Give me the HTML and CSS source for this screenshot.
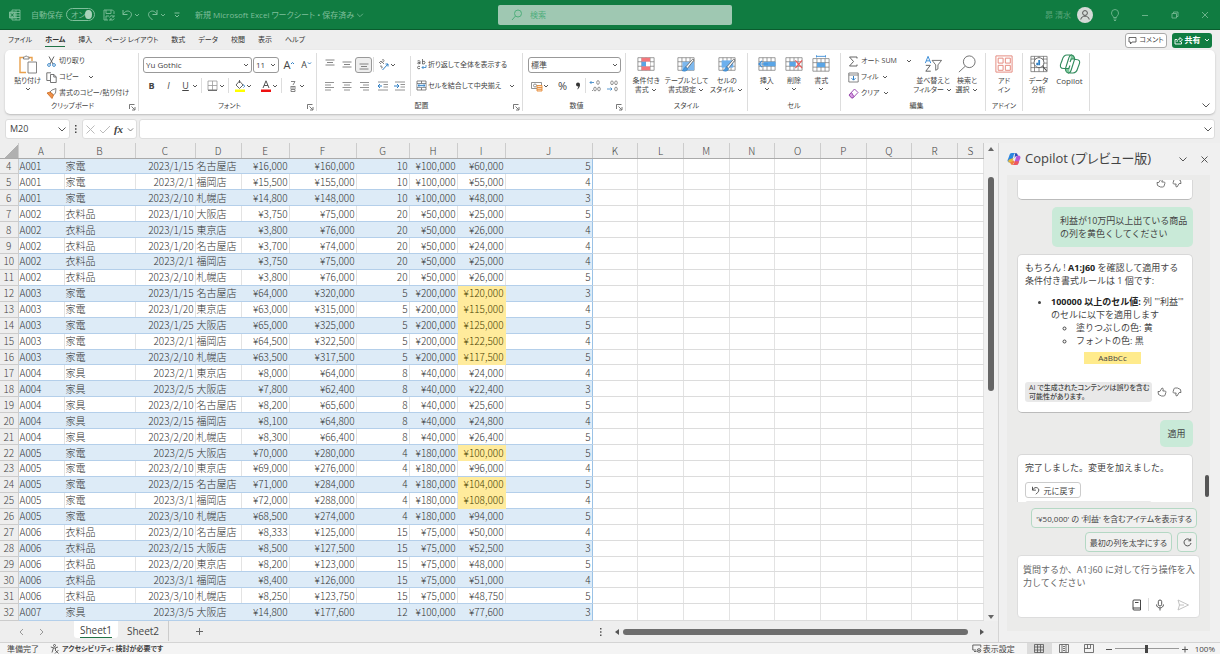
FILE: index.html
```html
<!DOCTYPE html>
<html lang="ja">
<head>
<meta charset="utf-8">
<title>新規 Microsoft Excel ワークシート</title>
<link rel="stylesheet" href="styles.css">
</head>
<body>
<svg class="defs" aria-hidden="true">
  <symbol id="chev" viewBox="0 0 8 8"><path d="M2 3l2 2 2-2" fill="none" stroke="currentColor" stroke-width=".9"/></symbol>
  <symbol id="chev-l" viewBox="0 0 12 12"><path d="M2.500 4.500L6 8l3.500-3.500" fill="none" stroke="currentColor" stroke-width=".9"/></symbol>
  <symbol id="launch" viewBox="0 0 8 8"><path d="M1.500 6V1.500h5M3.500 3.500l3 3M7 4v3H4" fill="none" stroke="#555" stroke-width=".8"/></symbol>
  <symbol id="up" viewBox="0 0 10 10"><path d="M1 4.500h1.800L5 1c1.500 0 1.400 1.500.8 3H8c1 0 1 1 .8 1.600L8 8.200c-.2.600-.6.800-1.200.8H4.500L1.500 7.500z" fill="none" stroke="#555" stroke-width=".8"/></symbol>
  <symbol id="al" viewBox="0 0 12 12"><path d="M1 2.500h9M1 5h6M1 7.500h9M1 10h6" stroke="#777" fill="none" stroke-width=".8"/></symbol>
  <symbol id="ac" viewBox="0 0 12 12"><path d="M1.500 2.500h9M3 5h6M1.500 7.500h9M3 10h6" stroke="#777" fill="none" stroke-width=".8"/></symbol>
  <symbol id="ar" viewBox="0 0 12 12"><path d="M2 2.500h9M5 5h6M2 7.500h9M5 10h6" stroke="#777" fill="none" stroke-width=".8"/></symbol>
  <symbol id="lines" viewBox="0 0 12 12"><path d="M1.500 3h9M3 5.500h6M1.500 8h9" stroke="#666" fill="none" stroke-width=".8"/></symbol>
  <symbol id="grid" viewBox="0 0 20 18"><path d="M1 2h18v14H1zM1 6.500h18M1 11.500h18M5.500 2v14M10 2v14M14.500 2v14" fill="#fff" stroke="#777" stroke-width=".8"/></symbol>
  <symbol id="brush" viewBox="0 0 20 20"><path d="M19 5.500L11.500 15 9.500 13.500 17.500 4.500z" fill="#fff" stroke="#555" stroke-width=".8"/><path d="M9.800 13.500c-2 0-2 2.500-4 4 2.500 1 5.500.5 6-2.200z" fill="#4a9be0" stroke="#2b78bd" stroke-width=".6"/></symbol>
</svg>

<header class="title">
  <div class="title-left">
    <svg class="xl" width="12" height="12" viewBox="0 0 12 12" fill="none" stroke="currentColor" stroke-width=".9"><path d="M3 3V1h8v10H3V9M7 1v10M3 3.500h8M3 6h8M3 8.500h8"/><path d="M.5 3h5.500v6H.5z" fill="#6fb58e"/><path d="M2 4.500l2.500 3M4.500 4.500L2 7.500" stroke="#107c41"/></svg>
    <label class="autosave">自動保存 <button class="toggle" aria-label="自動保存 オン"><span>オン</span><i></i></button></label>
    <button class="plain" aria-label="保存"><svg width="12" height="12" viewBox="0 0 12 12" fill="none" stroke="currentColor" stroke-width=".9"><path d="M5 11H1V1h8.500L11 2.500V5M3 1v3.500h5V1M3 11V7h3M6.500 8.500a2.300 2.300 0 0 1 4-1M11 6v2H9M11.300 9.500a2.300 2.300 0 0 1-4 .7M7 12v-2h2"/></svg></button>
    <button class="plain undo" aria-label="元に戻す"><svg width="12" height="12" viewBox="0 0 12 12" fill="none" stroke="currentColor"><path d="M2 1v4.500h4.500M2 5.500C4 2 6.500 1.500 8.500 2.500c2.500 1.300 2.500 4 .5 6L6.500 11"/></svg><svg width="8" height="8"><use href="#chev"/></svg></button>
    <button class="plain undo" aria-label="やり直し"><svg width="12" height="12" viewBox="0 0 12 12" fill="none" stroke="currentColor"><path d="M10 1v4.500H5.500M10 5.500C8 2 5.500 1.500 3.500 2.500 1 3.800 1 6.500 3 8.500L5.500 11"/></svg><svg width="8" height="8"><use href="#chev"/></svg></button>
    <button class="plain custom" aria-label="カスタマイズ"><svg width="8" height="8" viewBox="0 0 8 8" fill="none" stroke="currentColor"><path d="M1.500 2h5M2 4l2 2 2-2"/></svg></button>
    <button class="plain doc">新規 Microsoft Excel ワークシート • 保存済み<svg width="10" height="10" viewBox="0 0 12 12"><use href="#chev-l"/></svg></button>
  </div>
  <label class="search"><svg width="12" height="12" viewBox="0 0 12 12" fill="none" stroke="currentColor"><circle cx="7" cy="4.500" r="3.500"/><path d="M4.500 7L1 11"/></svg><input type="text" placeholder="検索" aria-label="検索"></label>
  <div class="title-right">
    <span>昴 清水</span>
    <svg width="16" height="16" viewBox="0 0 16 16"><circle cx="8" cy="8" r="8" fill="#d5dad7"/><g fill="none" stroke="#555"><circle cx="8" cy="6" r="2.400"/><path d="M3.800 12.500c.5-4.500 7.900-4.500 8.400 0"/></g></svg>
    <button class="plain bulb" aria-label="ヒント"><svg width="10" height="12" viewBox="0 0 10 12" fill="none" stroke="currentColor" stroke-width=".9"><path d="M3.500 8.500C3.500 7 1.500 6.500 1.500 4a3.500 3.500 0 0 1 7 0c0 2.500-2 3-2 4.500zM3.500 10h3M4 11.500h2"/></svg></button>
    <button class="plain win" aria-label="最小化"><svg width="8" height="8"><path d="M1 4.500h6" stroke="currentColor" stroke-width=".9"/></svg></button>
    <button class="plain win" aria-label="元のサイズ"><svg width="8" height="8" fill="none" stroke="currentColor" stroke-width=".9"><path d="M1 2.500h4.500V7H1zM2.500 2.500V1h4.500v4.500H5.500"/></svg></button>
    <button class="plain win" aria-label="閉じる"><svg width="8" height="8" stroke="currentColor" stroke-width=".9"><path d="M1 1l6 6M7 1L1 7"/></svg></button>
  </div>
</header>

<nav class="tabs">
  <a href="#">ファイル</a><a href="#" class="on">ホーム</a><a href="#">挿入</a><a href="#">ページ レイアウト</a><a href="#">数式</a><a href="#">データ</a><a href="#">校閲</a><a href="#">表示</a><a href="#">ヘルプ</a>
  <button class="comment"><svg width="9" height="9" viewBox="0 0 9 9"><path d="M1 1.500h7v4.500H4L2.500 8V6H1z" fill="none" stroke="#444" stroke-width=".8"/></svg>コメント</button>
  <button class="share"><svg width="9" height="9" viewBox="0 0 9 9"><path d="M3 3.500H1V8h6.500V6M3 6c0-2 1-3 3-3V1.500L8.500 4 6 6V4.500" fill="none" stroke="#fff" stroke-width=".9"/></svg>共有<svg width="8" height="8"><use href="#chev"/></svg></button>
</nav>

<section class="ribbon">
  <div class="grp g-clip">
    <div class="body">
      <button class="big paste"><svg width="20" height="20" viewBox="0 0 20 20" fill="none"><path d="M8 18.500H2V3.500h3.500M10.500 3.500H14V7" stroke="#e9a04c" stroke-width="1.400"/><path d="M5.500 5V3h1.300a1.500 1.500 0 0 1 2.800 0H11v2z" stroke="#777" fill="#fff" stroke-width=".9"/><path d="M10 8h8.500v11H10z" stroke="#777" fill="#fff" stroke-width=".9"/></svg>貼り付け<svg width="8" height="8"><use href="#chev"/></svg></button>
      <div class="stack">
        <button><svg width="11" height="11" viewBox="0 0 11 11" fill="none" stroke="#555" stroke-width=".9"><path d="M3 .5L7 8M8 .5L4 8"/><g stroke="#2f7fc4"><circle cx="3" cy="9" r="1.400"/><circle cx="8" cy="9" r="1.400"/></g></svg>切り取り</button>
        <button><svg width="11" height="11" viewBox="0 0 11 11" fill="none" stroke="#666" stroke-width=".9"><path d="M4 8.500H.8V.8H5M4.500 2.500h3.500L10.200 5v5.500H4.500zM7.800 2.500V5h2.400"/></svg>コピー <svg class="gap" width="8" height="8"><use href="#chev"/></svg></button>
        <button><svg width="11" height="11" viewBox="0 0 11 11"><path d="M6 2L10 .5 9.500 5 7.500 7 4 4z" fill="#fff" stroke="#666" stroke-width=".8"/><path d="M1 5l3-1 3.500 3L6 10.500z" fill="#f0924a" stroke="#c96a20" stroke-width=".8"/></svg>書式のコピー/貼り付け</button>
      </div>
    </div>
    <h2>クリップボード</h2><svg class="dlg" width="8" height="8"><use href="#launch"/></svg>
  </div>

  <div class="grp g-font">
    <div class="body rows">
      <div class="row">
        <span class="sel font"><select aria-label="フォント"><option>Yu Gothic</option></select><svg width="8" height="8"><use href="#chev"/></svg></span>
        <span class="sel size"><select aria-label="フォント サイズ"><option>11</option></select><svg width="8" height="8"><use href="#chev"/></svg></span>
        <button class="ib" aria-label="拡大"><span class="az">A</span><svg width="5" height="8" viewBox="0 0 5 8"><path d="M1 3l1.500-1.500L4 3" stroke="#2f7fc4" fill="none"/></svg></button>
        <button class="ib" aria-label="縮小"><span class="az small">A</span><svg width="5" height="8" viewBox="0 0 5 8"><path d="M1 1.500L2.500 3 4 1.500" stroke="#2f7fc4" fill="none"/></svg></button>
      </div>
      <div class="row">
        <button class="ib"><b>B</b></button><button class="ib"><i>I</i></button><button class="ib"><u>U</u></button><svg class="cv" width="8" height="8"><use href="#chev"/></svg>
        <i class="bar"></i>
        <button class="ib" aria-label="罫線"><svg width="11" height="11" viewBox="0 0 11 11" fill="none" stroke="#999"><path d="M1 1h9v9H1zM5.500 1v9M1 5.500h9" stroke-width=".8"/><path d="M1 10.300h9" stroke="#555"/></svg></button><svg class="cv" width="8" height="8"><use href="#chev"/></svg>
        <i class="bar"></i>
        <button class="ib" aria-label="塗りつぶし"><svg width="12" height="12" viewBox="0 0 12 12"><path d="M5.500 1L2 5l3.500 3.500L9 5zM5.500 0v3" fill="#fff" stroke="#555" stroke-width=".9"/><path d="M9.500 4.500q2 2.500 0 3" stroke="#2f7fc4" fill="none"/><path d="M1 9.500h10V12H1z" fill="#ff0"/></svg></button><svg class="cv" width="8" height="8"><use href="#chev"/></svg>
        <button class="ib" aria-label="フォントの色"><svg width="12" height="12" viewBox="0 0 12 12"><path d="M3 8L6 .8 9 8M4 5.500h4" fill="none" stroke="#555"/><path d="M1 9.500h10V12H1z" fill="#e11"/></svg></button><svg class="cv" width="8" height="8"><use href="#chev"/></svg>
        <i class="bar"></i>
        <button class="ib" aria-label="ふりがな"><svg width="10" height="12" viewBox="0 0 10 12" fill="none" stroke="#777" stroke-width=".9"><path d="M3 1.500h4L5 5M2.500 6.500h5M2 8h6M3 9.500h4M3 9.500v2h4v-2"/></svg></button><svg class="cv" width="8" height="8"><use href="#chev"/></svg>
      </div>
    </div>
    <h2>フォント</h2><svg class="dlg" width="8" height="8"><use href="#launch"/></svg>
  </div>

  <div class="grp g-align">
    <div class="body cols">
      <div class="rows left">
        <div class="row">
          <button class="ib" aria-label="上揃え"><svg width="12" height="12"><use href="#lines" y="-2"/></svg></button><button class="ib" aria-label="中央"><svg width="12" height="12"><use href="#lines"/></svg></button><button class="ib on" aria-label="下揃え"><svg width="12" height="12"><use href="#lines" y="2"/></svg></button>
          <i class="bar"></i>
          <button class="ib" aria-label="方向"><svg width="12" height="12" viewBox="0 0 12 12" fill="none"><path d="M1 4l2-2 3 3M2 5l1.500-1.500M4 1q2-1 2 .5T4.500 3M2 7.500q1-1.500 2 0t-1 1.500" stroke="#666" stroke-width=".8"/><path d="M4.500 11L10 5M7.500 5H10v2.500" stroke="#2f7fc4"/></svg></button><svg class="cv" width="8" height="8"><use href="#chev"/></svg>
        </div>
        <div class="row">
          <button class="ib" aria-label="左揃え"><svg width="12" height="12"><use href="#al"/></svg></button><button class="ib" aria-label="中央揃え"><svg width="12" height="12"><use href="#ac"/></svg></button><button class="ib" aria-label="右揃え"><svg width="12" height="12"><use href="#ar"/></svg></button>
          <i class="bar"></i>
          <button class="ib" aria-label="インデント減"><svg width="12" height="12" viewBox="0 0 12 12" fill="none"><path d="M1 2h10M6.500 4.500H11M6.500 7H11M1 10h10" stroke="#777" stroke-width=".8"/><path d="M5 6H1M3 4L1 6l2 2" stroke="#2f7fc4"/></svg></button><button class="ib" aria-label="インデント増"><svg width="12" height="12" viewBox="0 0 12 12" fill="none"><path d="M1 2h10M6.500 4.500H11M6.500 7H11M1 10h10" stroke="#777" stroke-width=".8"/><path d="M0 6h4.500M3 4l2 2-2 2" stroke="#2f7fc4"/></svg></button>
        </div>
      </div>
      <i class="vbar"></i>
      <div class="rows wide">
        <div class="row"><button class="txt"><svg width="11" height="11" viewBox="0 0 11 11" fill="none" stroke="#555" stroke-width=".8"><path d="M1.500 2q2.500-1 2.500.5V5M4 3.500Q1.500 3 1.500 4.200T4 4.500M6.500 0v5q2.500.5 2.500-1.500T6.500 2.500M4 7.500Q1.500 6.500 1.500 8.500T4 9.500"/><path d="M10 6v2.500H6M7.500 7L6 8.500 7.500 10" stroke="#2f7fc4"/></svg>折り返して全体を表示する</button></div>
        <div class="row"><button class="txt"><svg width="11" height="11" viewBox="0 0 11 11" fill="none"><path d="M1 1h9v9H1zM1 3.500h9M1 7.500h9M5.500 1v2.500M5.500 7.500V10" stroke="#666" stroke-width=".8"/><path d="M1.500 3.900h8v3.300h-8z" fill="#d8eafa"/><path d="M2 5.500h7M3.500 4.200L2 5.500l1.500 1.300M7.500 4.200L9 5.500 7.500 6.800" stroke="#2f7fc4" stroke-width=".8"/></svg>セルを結合して中央揃え</button><svg class="cv push" width="8" height="8"><use href="#chev"/></svg></div>
      </div>
    </div>
    <h2>配置</h2><svg class="dlg" width="8" height="8"><use href="#launch"/></svg>
  </div>

  <div class="grp g-num">
    <div class="body rows">
      <div class="row"><span class="sel num"><select aria-label="表示形式"><option>標準</option></select><svg width="8" height="8"><use href="#chev"/></svg></span></div>
      <div class="row">
        <button class="ib" aria-label="通貨"><svg width="12" height="12" viewBox="0 0 12 12" fill="none"><path d="M.5 2.500h10v6H.5z" stroke="#777" stroke-width=".8"/><circle cx="4" cy="5.500" r="1.500" stroke="#777" stroke-width=".8"/><path d="M6 5.500h5V11H6zM6 7.500h5M6 9.300h5" stroke="#e58b35" fill="#fbe3cc" stroke-width=".9"/></svg></button><svg class="cv" width="8" height="8"><use href="#chev"/></svg>
        <button class="ib pct">%</button><button class="ib comma" aria-label="桁区切り"><svg width="8" height="12" viewBox="0 0 8 12"><path d="M5.900 4.500C6 7 5 8.500 3 9.500 4 8 4.500 7 4.300 6z" fill="#333"/><circle cx="4" cy="4.500" r="2" fill="#333"/></svg></button>
        <i class="bar"></i>
        <button class="ib" aria-label="小数点以下を増やす"><svg width="13" height="12" viewBox="0 0 13 12" fill="none" stroke="#777" stroke-width=".8"><path d="M5 2.500H1M2.500 1L1 2.500 2.500 4" stroke="#2f7fc4"/><ellipse cx="9" cy="2.500" rx="1.300" ry="1.900"/><ellipse cx="6" cy="9" rx="1.300" ry="1.900"/><ellipse cx="10" cy="9" rx="1.300" ry="1.900"/><path d="M3 10.500h1"/></svg></button>
        <button class="ib" aria-label="小数点以下を減らす"><svg width="13" height="12" viewBox="0 0 13 12" fill="none" stroke="#777" stroke-width=".8"><ellipse cx="6" cy="2.800" rx="1.300" ry="1.900"/><ellipse cx="10" cy="2.800" rx="1.300" ry="1.900"/><ellipse cx="10" cy="9" rx="1.300" ry="1.900"/><path d="M1 9h5M4.500 7.500L6 9l-1.500 1.500" stroke="#2f7fc4"/></svg></button>
      </div>
    </div>
    <h2>数値</h2><svg class="dlg" width="8" height="8"><use href="#launch"/></svg>
  </div>

  <div class="grp g-style">
    <div class="body bigs">
      <button class="big"><svg width="20" height="20" viewBox="0 0 20 20"><use href="#grid" width="20" height="18" y="1"/><path d="M5 3h9.500v4.500H5z" fill="#f4777c"/><path d="M5 12.500h9.500V17H5z" fill="#f4777c"/><path d="M5 7.500h5v5H5z" fill="#5aa5e6"/><path d="M10 7.500h4.500v5H10z" fill="#fff"/></svg>条件付き<span>書式 <svg width="8" height="8"><use href="#chev"/></svg></span></button>
      <button class="big"><svg width="20" height="20" viewBox="0 0 20 20"><use href="#grid" width="20" height="18" y="1"/><path d="M6 7.500h13V17H6z" fill="#7db8ee"/><use href="#brush" width="20" height="20"/></svg>テーブルとして<span>書式設定 <svg width="8" height="8"><use href="#chev"/></svg></span></button>
      <button class="big"><svg width="20" height="20" viewBox="0 0 20 20"><use href="#grid" width="20" height="18" y="1"/><path d="M4 6h13v8H4z" fill="#6db0ee"/><use href="#brush" width="20" height="20"/></svg>セルの<span>スタイル <svg width="8" height="8"><use href="#chev"/></svg></span></button>
    </div>
    <h2>スタイル</h2>
  </div>

  <div class="grp g-cell">
    <div class="body bigs">
      <button class="big"><svg width="20" height="20" viewBox="0 0 20 20"><use href="#grid" width="20" height="18" y="1"/><path d="M6 7.500h13.500v5H6z" fill="#5aa5e6"/><path d="M11 10H1M4.500 6.500L1 10l3.500 3.500" stroke="#3f8fd8" fill="none" stroke-width="1.300"/></svg>挿入<svg width="8" height="8"><use href="#chev"/></svg></button>
      <button class="big"><svg width="20" height="20" viewBox="0 0 20 20"><use href="#grid" width="20" height="18" y="1"/><path d="M5 7.500h7v5H5z" fill="#5aa5e6"/><path d="M11.500 6l7.500 8.500M19 6l-7.500 8.500" stroke="#e55" stroke-width="1.200"/></svg>削除<svg width="8" height="8"><use href="#chev"/></svg></button>
      <button class="big"><svg width="20" height="20" viewBox="0 0 20 20"><path d="M5 1.500h10M5 .3v2.400M15 .3v2.400" stroke="#3f8fd8"/><use href="#grid" width="20" height="18" y="2"/><path d="M5.500 8.500h9v5h-9z" fill="#5aa5e6"/></svg>書式<svg width="8" height="8"><use href="#chev"/></svg></button>
    </div>
    <h2>セル</h2>
  </div>

  <div class="grp g-edit">
    <div class="body">
      <div class="stack">
        <button><svg width="11" height="11" viewBox="0 0 11 11"><path d="M9 2.500V1H1.500L5.500 5.500l-4 4.500H9V8.500" fill="none" stroke="#555" stroke-width=".9"/></svg>オート SUM <svg class="gap" width="8" height="8"><use href="#chev"/></svg></button>
        <button><svg width="11" height="11" viewBox="0 0 11 11" fill="none"><path d="M.8 1h9.400v9H.8zM.8 3h9.400" stroke="#666" stroke-width=".8"/><path d="M5.500 4v4M3.500 6.200l2 2 2-2" stroke="#2f7fc4"/></svg>フィル <svg width="8" height="8"><use href="#chev"/></svg></button>
        <button><svg width="11" height="11" viewBox="0 0 11 11" fill="none" stroke="#9c4fb0" stroke-width="1"><path d="M6.500 1L10 4.500 5 9.800H3.500L1 7z"/><path d="M1 7l2.500 2.800H5l1-1L3.500 4.500z" fill="#d79be3"/></svg>クリア <svg width="8" height="8"><use href="#chev"/></svg></button>
      </div>
      <button class="big"><svg width="20" height="20" viewBox="0 0 20 20" fill="none"><path d="M1.500 9L4.500 1.500 7.500 9M2.500 6.500h4" stroke="#3f8fd8" stroke-width="1.100"/><path d="M2 11.500h5L2 18h5.500" stroke="#555"/><path d="M9 6h10.500L15.500 11v4.500L13 17v-6z" stroke="#555" stroke-width=".9"/></svg>並べ替えと<span>フィルター <svg width="8" height="8"><use href="#chev"/></svg></span></button>
      <button class="big"><svg width="20" height="20" viewBox="0 0 20 20" fill="none" stroke="#555" stroke-width=".9"><circle cx="12.500" cy="7.500" r="6.500"/><path d="M8 12.500L1 19"/></svg>検索と<span>選択 <svg width="8" height="8"><use href="#chev"/></svg></span></button>
    </div>
    <h2>編集</h2>
  </div>

  <div class="grp g-add">
    <div class="body bigs">
      <button class="big"><svg width="20" height="20" viewBox="0 0 20 20" fill="none" stroke="#e58b80" stroke-width="1.100"><path d="M1 1h18v18H1zM3.500 3.500h5.500V9H3.500zM11.500 3.500H17V9h-5.500zM3.500 11.500h5.500V17H3.500zM11.500 11.500H17V17h-5.500z"/></svg>アド<span>イン</span></button>
    </div>
    <h2>アドイン</h2>
  </div>

  <div class="grp g-ana">
    <div class="body bigs">
      <button class="big"><svg width="20" height="20" viewBox="0 0 20 20" fill="none" stroke="#666" stroke-width=".8"><path d="M1 1.500h18v17H1zM1 4.500h18M1 9h18M1 14h18M5 1.500v17M10 1.500v17M15 1.500v17"/><circle cx="10" cy="8.500" r="5.500" fill="#fff" stroke="#444"/><path d="M7 11.500V8.500h2v3zM9.200 11.500v-6h2v6z" fill="#2f7fc4" stroke="none"/><path d="M14 12.500l4.500 5" stroke="#444" stroke-width="1.200"/></svg>データ<span>分析</span></button>
      <button class="big cop"><svg width="20" height="20" viewBox="0 0 22 20" fill="#fff" stroke="#2f8a5b" stroke-width="1.100"><path d="M13 1H8C5 1 4 3 3.200 6S.5 11 1.500 13s3 1.500 5 1.500L9.500 5q1-4 3.500-4z"/><path d="M12 1c2.500 0 3.200 1 3.800 4h-3.500L11 8" fill="#7cc79b"/><path d="M9 19h5c3 0 4-2 4.800-5s2.700-5 1.700-7-3-1.500-5-1.500L12.500 15q-1 4-3.500 4z"/><path d="M10 19c-2.500 0-3.200-1-3.800-4.500h3.500L11 11.500" fill="#7cc79b"/></svg>Copilot</button>
    </div>
  </div>
  <button class="collapse" aria-label="リボンを折りたたむ"><svg width="12" height="12" viewBox="0 0 12 12"><use href="#chev-l"/></svg></button>
</section>

<section class="formula">
  <label class="name"><input type="text" value="M20" aria-label="名前ボックス"><svg width="12" height="12" viewBox="0 0 12 12"><use href="#chev-l"/></svg></label>
  <svg class="dots" width="4" height="10"><path d="M1 1h1.500v1.500H1zM1 4.300h1.500v1.500H1zM1 7.600h1.500v1.500H1z" fill="#444"/></svg>
  <div class="fx"><svg width="11" height="11" viewBox="0 0 11 11"><path d="M1.500 1.500l8 8M9.500 1.500l-8 8" stroke="#bbb"/></svg><svg width="12" height="11" viewBox="0 0 12 11"><path d="M1 6l3 3 7-7" stroke="#bbb" fill="none"/></svg><em>fx</em><svg width="9" height="9" viewBox="0 0 12 12"><use href="#chev-l"/></svg></div>
  <label class="input"><input type="text" aria-label="数式バー"><svg width="12" height="12" viewBox="0 0 12 12"><use href="#chev-l"/></svg></label>
</section>

<main class="work">
  <div class="book">
    <div class="sheet">
      <div class="cells">
        <table id="sheet"></table>
      </div>
      <div class="vscroll"><svg width="8" height="8"><path d="M1 6h6L4 2z" fill="#666"/></svg><i></i><svg width="8" height="8"><path d="M1 2h6L4 6z" fill="#666"/></svg></div>
    </div>
    <div class="sheettabs">
      <button class="nav" aria-label="前へ"><svg width="8" height="10"><path d="M6 2L3 5l3 3" fill="none" stroke="#999"/></svg></button>
      <button class="nav" aria-label="次へ"><svg width="8" height="10"><path d="M2 2l3 3-3 3" fill="none" stroke="#999"/></svg></button>
      <button class="tab on"><span>Sheet1</span></button>
      <button class="tab"><span>Sheet2</span></button>
      <button class="add" aria-label="新しいシート"><svg width="9" height="9"><path d="M4.500 1v7M1 4.500h7" stroke="#666"/></svg></button>
      <div class="hscroll"><svg width="4" height="10"><path d="M1 1h1.500v1.500H1zM1 4.300h1.500v1.500H1zM1 7.600h1.500v1.500H1z" fill="#555"/></svg><svg class="la" width="8" height="8"><path d="M6 1v6L2 4z" fill="#555"/></svg><i></i><svg class="ra" width="8" height="8"><path d="M2 1v6l4-3z" fill="#555"/></svg></div>
    </div>
  </div>

  <aside class="copilot">
    <header>
      <svg width="14" height="14" viewBox="0 0 14 14"><path d="M9 1H5C3 1 2.800 2 2 4.500S0 8 .8 9.500 3 10.500 4.500 10L6.500 4Q7 1 9 1z" fill="#2b86e0"/><path d="M2 7.500C1 9 .5 10 2.500 10.500c1.500.3 2.500 0 3-1.500L6.500 6z" fill="#e8b83a"/><path d="M8.500 1c1.500 0 2 1 2.500 3H9L7.500 6 8 2z" fill="#2a4fb5"/><path d="M5 13h4c2 0 2.200-1 3-3.500s2-3.500 1.200-5S11 3.500 9.500 4l-2 6Q7 13 5 13z" fill="#b458d8"/><path d="M5 13c2 0 2.300-2 2.800-4l4.200.5C11.200 12 11 13 9 13z" fill="#ef5a5a"/><path d="M5.500 13c-1.500 0-2-1-2.500-3 2 0 2-.5 3-2l1.500 2z" fill="#f0803c"/></svg>
      <h1>Copilot (プレビュー版)</h1>
      <button class="plain" aria-label="オプション"><svg width="12" height="12" viewBox="0 0 12 12"><use href="#chev-l"/></svg></button>
      <button class="plain" aria-label="閉じる"><svg width="9" height="9" viewBox="0 0 9 9"><path d="M1.500 1.500l6 6M7.500 1.500l-6 6" stroke="currentColor" stroke-width=".9"/></svg></button>
    </header>
    <div class="panel">
      <div class="chat">
        <div class="card cut-top"><svg width="10" height="10"><use href="#up"/></svg><svg class="down" width="10" height="10"><use href="#up"/></svg></div>
        <p class="mine">利益が10万円以上出ている商品の列を黄色くしてください</p>
        <div class="card rule">
          <p>もちろん ! <b>A1:J60</b> を確認して適用する条件付き書式ルールは 1 個です:</p>
          <ul><li><b>100000 以上のセル値:</b> 列 "'利益'" のセルに以下を適用します<ul><li>塗りつぶしの色: 黄</li><li>フォントの色: 黒</li></ul></li></ul>
          <span class="sample">AaBbCc</span>
          <div class="note"><small>AI で生成されたコンテンツは誤りを含む可能性があります。</small><svg width="10" height="10"><use href="#up"/></svg><svg class="down" width="10" height="10"><use href="#up"/></svg></div>
        </div>
        <p class="mine apply">適用</p>
        <div class="card done">
          <p>完了しました。変更を加えました。</p>
          <button class="revert"><svg width="9" height="9" viewBox="0 0 12 12" fill="none" stroke="#444" stroke-width="1.200"><path d="M2 1v4.500h4.500M2 5.500C4 2 6.500 1.500 8.500 2.500c2.500 1.300 2.500 4 .5 6L6.500 11"/></svg>元に戻す</button>
          <div class="note"><small>AI で生成されたコンテンツは誤りを含む可能性があります。</small></div>
        </div>
      </div>
      <div class="sugg">
        <button>'¥50,000' の '利益' を含むアイテムを表示する</button>
        <button>最初の列を太字にする</button><button class="re" aria-label="更新"><svg width="9" height="9" viewBox="0 0 9 9" fill="none" stroke="#444" stroke-width=".9"><path d="M7.500 2.500A3.500 3.500 0 1 0 8 5M7.700.5v2.300H5.400"/></svg></button>
      </div>
      <div class="ask">
        <textarea rows="2" aria-label="質問" placeholder="質問するか、A1:J60 に対して行う操作を入力してください"></textarea>
        <div class="tools"><svg width="10" height="12" viewBox="0 0 10 12" fill="none" stroke="#333"><path d="M2 1h6.500v10H2Q1 11 1 10V2q0-1 1-1zM1 9h7.500M3 3.500h3.500" stroke-width=".9"/></svg><i></i><svg width="10" height="12" viewBox="0 0 10 12" fill="none" stroke="#444" stroke-width=".9"><rect x="3.300" y="1" width="3.400" height="6" rx="1.700"/><path d="M1.500 5.500c0 4.500 7 4.500 7 0M5 9v2.500"/></svg><svg class="send" width="12" height="12" viewBox="0 0 12 12" fill="none" stroke="#bbb" stroke-width=".9"><path d="M1 1l10.500 5L1 11l1.500-5zM2.500 6H7"/></svg></div>
      </div>
    </div>
    <i class="thumb"></i>
  </aside>
</main>

<footer class="status">
  <span>準備完了</span>
  <span class="acc"><svg width="10" height="10" viewBox="0 0 10 10" fill="none" stroke="#444" stroke-width=".8"><circle cx="4.500" cy="1.500" r="1"/><path d="M.8 3l2.700.8L2 8.500M8 3l-2.500.8M3.500 4h2v2M5 6l3.500 3.500M8.500 6L5 9.500"/></svg>アクセシビリティ: 検討が必要です</span>
  <span class="disp"><svg width="10" height="9" viewBox="0 0 10 9" fill="none" stroke="#444" stroke-width=".8"><path d="M4 6H.8V1h8v2.500M2 7.500h2.500"/><circle cx="7" cy="6.500" r="1.800"/><circle cx="7" cy="6.500" r=".5"/></svg>表示設定</span>
  <button class="view on" aria-label="標準"><svg width="10" height="9" fill="none" stroke="#555" stroke-width=".8"><path d="M.5.5h9v8h-9zM3.500.5v8M6.500.5v8M.5 3h9M.5 6h9"/></svg></button>
  <button class="view" aria-label="ページ レイアウト"><svg width="10" height="9" fill="none" stroke="#555" stroke-width=".8"><path d="M.5.5h9v8h-9zM3 .5v8M7 .5v8M4 2.500h2M4 4.500h2M4 6.500h2"/></svg></button>
  <button class="view" aria-label="改ページ"><svg width="10" height="9" fill="none" stroke="#555" stroke-width=".8"><path d="M.5.5h9v8h-9zM3.500.5v4M6.500.5v4H.5"/></svg></button>
  <span class="zoom"><svg width="6" height="8"><path d="M0 4.500h6" stroke="#555"/></svg><input type="range" aria-label="ズーム" value="50"><svg width="6" height="8"><path d="M0 4.500h6M3 1.500v6" stroke="#555"/></svg></span>
  <output>100%</output>
</footer>
<script src="sheet.js"></script>
</body>
</html>
```

FILE: styles.css
```css
* { box-sizing: border-box; }
html, body { height: 100%; }
body {
  margin: 0;
  display: flex;
  flex-direction: column;
  background: #eee;
  color: #444;
  font: 8px/10px "Open Sans", "Noto Sans CJK JP", sans-serif;
  font-feature-settings: "palt";
  overflow: hidden;
}
.defs { position: absolute; width: 0; height: 0; }
button, input, select, textarea { font: inherit; color: inherit; font-feature-settings: inherit; border: 0; background: none; padding: 0; margin: 0; outline: 0; min-width: 0; }
button { white-space: nowrap; }
svg { display: block; flex: none; }
h1, h2, p, ul { margin: 0; font-weight: 400; }

/* title bar */
.title { flex: none; height: 30px; display: flex; align-items: center; background: #107c41; border-bottom: 1px solid #0a5c2e; color: #7fbf9b; }
.title-left { flex: 1 1 498px; display: flex; align-items: center; gap: 8px; padding-left: 9px; }
.plain { display: flex; align-items: center; }
.autosave { display: flex; align-items: center; gap: 3px; margin-left: 2px; }
.toggle { display: flex; align-items: center; justify-content: space-between; width: 29px; height: 13px; padding: 0 2px 0 4px; border: 1px solid #7fbf9b; border-radius: 7px; }
.toggle i { width: 9px; height: 9px; border-radius: 50%; background: #a9d3bb; }
.undo, .custom { margin-left: -2px; }
.doc { gap: 1px; margin-left: 6px; }
.search { flex: 0 0 234px; height: 20px; display: flex; align-items: center; gap: 7px; padding-left: 13px; background: #9fc8b2; border-radius: 2px; color: #4fae7c; }
.search input::placeholder { color: #4fae7c; opacity: 1; }
.title-right { flex: 1 1 488px; display: flex; align-items: center; justify-content: flex-end; padding-right: 11px; gap: 6px; color: #74b892; }
.title-right > span { color: #5aa67b; }
.bulb { margin: 0 5px 0 11px; }
.win { margin-left: 10px; }
.win + .win { margin-left: 16px; }

/* ribbon tabs */
.tabs { flex: none; height: 20px; display: flex; align-items: center; gap: 13px; padding: 0 8px; font-size: 7px; }
.tabs a { color: #333; text-decoration: none; padding: 2px 0 1px; border-bottom: 1px solid transparent; }
.tabs .on { font-weight: 700; border-color: #217346; }
.comment, .share { display: flex; align-items: center; justify-content: center; gap: 2px; height: 15px; border-radius: 3px; }
.comment { margin-left: auto; width: 42px; background: #fff; border: 1px solid #aaa; }
.share { width: 40px; margin-left: -8px; background: #107c41; color: #fff; font-weight: 700; font-size: 8px; }

/* ribbon */
.ribbon { flex: none; height: 64px; display: flex; margin: 0 5px; background: #fff; border-radius: 5px; box-shadow: 0 1px 2px #bbb; font-size: 7px; }
.grp { position: relative; display: flex; flex-direction: column; margin: 3px 0; border-right: 1px solid #ddd; }
.body { flex: 1; display: flex; min-height: 0; }
.grp h2 { font-size: 7px; line-height: 10px; text-align: center; }
.dlg { position: absolute; right: 2px; bottom: 0; }
.g-clip { width: 134px; }
.g-clip h2 { padding-left: 2px; }
.g-font { width: 178px; padding-left: 4px; }
.g-align { width: 206px; padding-left: 4px; }
.g-num { width: 103px; padding-left: 5px; }
.g-style { width: 122px; }
.g-cell { width: 93px; }
.g-edit { width: 145px; padding-left: 7px; }
.g-add { width: 37px; }
.g-ana { width: 67px; }
.big { display: flex; flex-direction: column; align-items: center; line-height: 9px; padding-top: 2px; }
.big > svg:first-child { width: 18px; height: 18px; margin-bottom: 3px; }
.big.paste { padding-top: 1px; }
.big.paste > svg:first-child { width: 20px; height: 20px; margin-bottom: 2px; }
.big span { display: flex; align-items: center; gap: 1px; }
.g-clip .big { width: 37px; margin-left: 4px; }
.bigs { justify-content: center; }
.bigs .big { flex: 1 1 0; }
.big.cop { font-size: 8px; margin-right: 4px; }
.big.cop > svg:first-child { width: 22px; height: 20px; margin-bottom: 2px; margin-top: -1px; }
.g-cell .bigs { padding: 0 5px; }
.g-edit .stack { width: 68px; }
.g-edit .big { width: 34px; }
.stack { display: flex; flex-direction: column; justify-content: space-between; }
.stack button { display: flex; align-items: center; gap: 2px; height: 16px; }
.stack .gap { margin-left: 6px; }
.rows { flex-direction: column; display: flex; gap: 4px; padding-top: 3px; }
.body.cols { gap: 5px; }
.cols .rows { padding-top: 3px; }
.left { width: 84px; }
.wide { flex: 1; }
.vbar { width: 1px; background: #ddd; height: 40px; margin-top: 3px; }
.row { display: flex; align-items: center; height: 17px; }
.ib { width: 17px; height: 16px; flex: none; display: flex; align-items: center; justify-content: center; font-size: 9px; }
.ib.on { background: #eee; border: 1px solid #999; border-radius: 3px; }
.cv { margin-left: -3px; }
.cv + .ib { margin-left: 4px; }
.az { font-size: 11px; }
.az.small { font-size: 9px; }
.pct { font-size: 11px; }
.comma { width: 13px; }
.bar { width: 1px; height: 15px; background: #ddd; margin: 0 1px; }
.g-font .cv + .bar { margin: 0 2px; }
.txt { display: flex; align-items: center; gap: 1px; }
.push { margin-left: auto; margin-right: 6px; }
.sel { display: grid; align-items: center; border: 1px solid #999; border-radius: 3px; height: 16px; background: #fff; font-size: 8px; }
.sel > * { grid-area: 1 / 1; }
.sel select { appearance: none; padding-left: 2px; height: 14px; line-height: 14px; }
.sel svg { justify-self: end; margin-right: 1px; pointer-events: none; }
.font { width: 109px; margin-right: 1px; }
.size { width: 26px; margin-right: 2px; }
.num { width: 93px; }
.collapse { margin: auto 3px 3px auto; }

/* formula bar */
.formula { flex: none; display: flex; align-items: center; gap: 2px; height: 20px; margin: 5px 5px 4px; }
.formula > label, .fx { display: flex; align-items: center; height: 20px; background: #fff; border: 1px solid #ddd; border-radius: 3px; }
.name { width: 65px; padding: 0 1px 0 4px; font-size: 9px; }
.name input { flex: 1; }
.dots { margin: 0 2px; }
.fx { width: 55px; justify-content: space-between; padding: 0 1px 0 2px; }
.fx em { font: italic 700 11px/12px "Liberation Serif", serif; }
.input { flex: 1; }
.input input { flex: 1; }

/* workbook */
.work { flex: 1; min-height: 0; display: flex; }
.book { flex: 1; min-width: 0; display: flex; flex-direction: column; border-right: 1px solid #d4d4d4; }
.sheet { flex: 1; min-height: 0; display: flex; }
.cells { flex: 1; min-width: 0; overflow: hidden; background: #fff; }
table { width: 100%; height: 100%; table-layout: fixed; border-collapse: collapse; font: 300 10px/14px "Noto Sans CJK JP", sans-serif; font-feature-settings: normal; color: #333; }
th, td { padding: 0 1px; white-space: nowrap; overflow: hidden; border-right: 1px solid #e3e3e3; border-bottom: 1px solid #dcdcdc; line-height: 14px; }
thead { height: 15px; }
th { background: #eee; font-weight: 300; text-align: center; padding: 0; border-color: #ccc; color: #444; }
thead th { border-bottom-color: #aaa; height: 15px; line-height: 13px; }
.corner { background: linear-gradient(135deg, #eee 60%, #b0b0b0 60%); }
td.n { text-align: right; }
tr.band td.t { background: #ddebf7; }
td.t { border-bottom-color: #b4cfea; }
tr.band td.t { border-right-color: #ddebf7; }
td.last.t, tr.band td.last.t { border-right-color: #9bc2e6; }
tr td.t.hot, tr.band td.t.hot { background: #ffeb9c; border-color: #ffeb9c; color: #4b3f00; }
.end, .end td, .end th { height: 1px; line-height: 0; border-bottom: 0; }
.vscroll { width: 14px; flex: none; display: flex; flex-direction: column; align-items: center; background: #f1f1f1; padding: 2px 0 0; }
.vscroll i { width: 6px; height: 45%; margin: 24px 0 auto; background: #666; border-radius: 3px; }
.sheettabs { flex: none; height: 21px; display: flex; align-items: center; font-size: 10px; }
.nav { width: 21px; }
.nav:first-child { margin-left: 10px; }
.nav svg { margin: auto; }
.tab { height: 20px; width: 51px; border-right: 1px solid #ccc; align-self: flex-start; }
.tab.on { margin-left: 22px; width: 44px; height: 17px; background: #fff; border: 0; border-radius: 0 0 3px 3px; }
.tab.on span { border-bottom: 1px solid #217346; }
.add { margin-left: 26px; }
.hscroll { display: flex; align-items: center; flex: 0 0 387px; margin-left: auto; margin-right: 12px; }
.hscroll i { flex: 1; height: 6px; background: #6e6e6e; border-radius: 3px; }
.la { margin: 0 2px 0 10px; }
.ra { margin-left: 10px; }

/* copilot pane */
.copilot { position: relative; flex: 0 0 221px; display: flex; flex-direction: column; padding: 0 10px 11px 8px; background: #f0f0f0; }
.copilot header { flex: none; display: flex; align-items: center; height: 32px; }
.copilot h1 { flex: 1; font-size: 13px; line-height: 18px; margin-left: 4px; padding-bottom: 2px; white-space: nowrap; }
.copilot header .plain + .plain { margin: 0 1px 0 11px; }
.panel { flex: 1; min-height: 0; display: flex; flex-direction: column; background: #ebebea; padding: 5px 10px 13px; font-size: 9px; line-height: 13px; font-feature-settings: normal; }
.chat { flex: 1; min-height: 0; display: flex; flex-direction: column; gap: 7px; overflow: hidden; padding: 0 7px 0 0; margin-bottom: 6px; }
.card { flex: none; background: #fff; border: 1px solid #d8d8d8; border-bottom-color: #bbb; border-radius: 5px; padding: 6px 7px; }
.cut-top { height: 20px; border-top: 0; border-radius: 0 0 5px 5px; display: flex; justify-content: flex-end; gap: 6px; padding: 0 10px; align-items: flex-start; }
.cut-top svg { margin-top: -2px; }
.down { transform: rotate(180deg); }
.mine { flex: none; align-self: flex-end; width: 141px; background: #c9ead8; border-radius: 5px; padding: 7px 4px 7px 8px; }
.apply { width: 33px; padding: 7px; text-align: center; }
.rule { height: 159px; display: flex; flex-direction: column; line-break: anywhere; }
.rule b { color: #222; }
.rule ul { padding-left: 26px; margin-top: 8px; }
.rule ul ul { margin: 0; padding-left: 25px; list-style: circle; }
.sample { align-self: center; width: 57px; margin: 5px 0 0 15px; text-align: center; font-size: 8px; line-height: 12px; background: #ffeb8c; }
.note { display: flex; align-items: center; gap: 6px; margin-top: auto; padding-bottom: 4px; }
.note small { width: 127px; padding: 1px 0 1px 4px; background: #e9e9e9; border-radius: 3px; font-size: 7px; line-height: 9px; font-weight: 500; font-feature-settings: "palt"; }
.note svg { margin-left: -1px; }
.done { height: 80px; margin-bottom: -40px; }
.done .note { margin-top: 3px; }
.revert { display: flex; align-items: center; justify-content: center; gap: 4px; width: 56px; height: 16px; margin-top: 8px; border: 1px solid #ccc; border-radius: 3px; font-size: 8px; }
.sugg { flex: none; display: flex; flex-wrap: wrap; justify-content: flex-end; gap: 4px 5px; margin: 0 3px 3px -8px; font-feature-settings: "palt"; }
.sugg button { height: 20px; padding: 0 4px; border: 1px solid #b4d8c4; border-radius: 4px; font-size: 8px; background: #f0f0ef; }
.sugg .re { width: 20px; padding-left: 5px; }
.ask { flex: none; background: #fff; border: 1px solid #ddd; border-radius: 4px; padding: 7px 2px 6px 5px; }
.ask textarea { display: block; width: 100%; height: 26px; resize: none; overflow: hidden; line-height: 13px; }
.ask textarea::placeholder { color: #666; opacity: 1; }
.tools { display: flex; align-items: center; justify-content: flex-end; gap: 6px; margin-top: 9px; padding-right: 8px; }
.tools i { width: 1px; height: 13px; background: #ddd; }
.send { margin-left: 6px; }
.thumb { position: absolute; right: 11px; bottom: 145px; width: 4px; height: 22px; border-radius: 2px; background: #555; }

/* status bar */
.status { flex: none; height: 12px; display: flex; align-items: center; background: #f4f4f4; border-top: 1px solid #d4d4d4; padding: 0 5px 0 7px; }
.acc { display: flex; gap: 2px; margin-left: 11px; font-size: 7px; font-weight: 700; }
.disp { display: flex; gap: 1px; margin-left: auto; margin-right: 12px; }
.view { width: 25px; height: 11px; }
.view svg { margin: auto; }
.view.on { background: #dcdcdc; }
.zoom { display: flex; align-items: center; gap: 3px; margin-left: 4px; }
.zoom input { appearance: none; width: 64px; height: 10px; background: linear-gradient(#999, #999) center / 100% 1px no-repeat; }
.zoom input::-webkit-slider-thumb { appearance: none; width: 3px; height: 8px; background: #444; }
.status output { margin-left: 7px; }
```

FILE: sheet.js
```js
const K = '家電', I = '衣料品', G = '家具';
const N = '名古屋店', F = '福岡店', S = '札幌店', O = '大阪店', T = '東京店';
const rows = [
  ['A001', K, '1/15', N, 16000, 160000, 10, 100000, 60000, 5],
  ['A001', K, '2/1', F, 15500, 155000, 10, 100000, 55000, 4],
  ['A001', K, '2/10', S, 14800, 148000, 10, 100000, 48000, 3],
  ['A002', I, '1/10', O, 3750, 75000, 20, 50000, 25000, 5],
  ['A002', I, '1/15', T, 3800, 76000, 20, 50000, 26000, 4],
  ['A002', I, '1/20', N, 3700, 74000, 20, 50000, 24000, 4],
  ['A002', I, '2/1', F, 3750, 75000, 20, 50000, 25000, 4],
  ['A002', I, '2/10', S, 3800, 76000, 20, 50000, 26000, 5],
  ['A003', K, '1/15', N, 64000, 320000, 5, 200000, 120000, 3],
  ['A003', K, '1/20', T, 63000, 315000, 5, 200000, 115000, 4],
  ['A003', K, '1/25', O, 65000, 325000, 5, 200000, 125000, 5],
  ['A003', K, '2/1', F, 64500, 322500, 5, 200000, 122500, 4],
  ['A003', K, '2/10', S, 63500, 317500, 5, 200000, 117500, 5],
  ['A004', G, '2/1', T, 8000, 64000, 8, 40000, 24000, 4],
  ['A004', G, '2/5', O, 7800, 62400, 8, 40000, 22400, 3],
  ['A004', G, '2/10', N, 8200, 65600, 8, 40000, 25600, 5],
  ['A004', G, '2/15', F, 8100, 64800, 8, 40000, 24800, 4],
  ['A004', G, '2/20', S, 8300, 66400, 8, 40000, 26400, 5],
  ['A005', K, '2/5', O, 70000, 280000, 4, 180000, 100000, 5],
  ['A005', K, '2/10', T, 69000, 276000, 4, 180000, 96000, 4],
  ['A005', K, '2/15', N, 71000, 284000, 4, 180000, 104000, 5],
  ['A005', K, '3/1', F, 72000, 288000, 4, 180000, 108000, 4],
  ['A005', K, '3/10', S, 68500, 274000, 4, 180000, 94000, 5],
  ['A006', I, '2/10', N, 8333, 125000, 15, 75000, 50000, 4],
  ['A006', I, '2/15', O, 8500, 127500, 15, 75000, 52500, 3],
  ['A006', I, '2/20', T, 8200, 123000, 15, 75000, 48000, 5],
  ['A006', I, '3/1', F, 8400, 126000, 15, 75000, 51000, 4],
  ['A006', I, '3/10', S, 8250, 123750, 15, 75000, 48750, 5],
  ['A007', G, '3/5', O, 14800, 177600, 12, 100000, 77600, 3],
];
const letters = 'ABCDEFGHIJKLMNOPQRS'.split('');
const widths = [18, 46, 71, 60, 46, 48, 67, 53, 48, 48, 87];
const yen = v => '¥' + v.toLocaleString('en-US');

let html = '<colgroup>' + widths.map(w => `<col style="width:${w}px">`).join('')
  + '<col>'.repeat(8) + '<col style="width:26px"></colgroup>';
html += '<thead><tr><th class="corner"></th>' + letters.map(l => `<th scope="col">${l}</th>`).join('') + '</tr></thead><tbody>';
rows.forEach((r, i) => {
  html += `<tr class="${i % 2 ? '' : 'band'}"><th scope="row">${i + 4}</th>`;
  r.forEach((v, c) => {
    const text = c === 2 ? '2023/' + v : [4, 5, 7, 8].includes(c) ? yen(v) : v;
    const cls = ['t'];
    if (c === 2 || c > 3) cls.push('n');
    if (c === 8 && v >= 100000) cls.push('hot');
    if (c === 9) cls.push('last');
    html += `<td class="${cls.join(' ')}">${text}</td>`;
  });
  html += '<td></td>'.repeat(9) + '</tr>';
});
html += '<tr class="end"><th></th>' + '<td class="t"></td>'.repeat(10) + '<td></td>'.repeat(9) + '</tr></tbody>';
document.getElementById('sheet').innerHTML = html;
```
